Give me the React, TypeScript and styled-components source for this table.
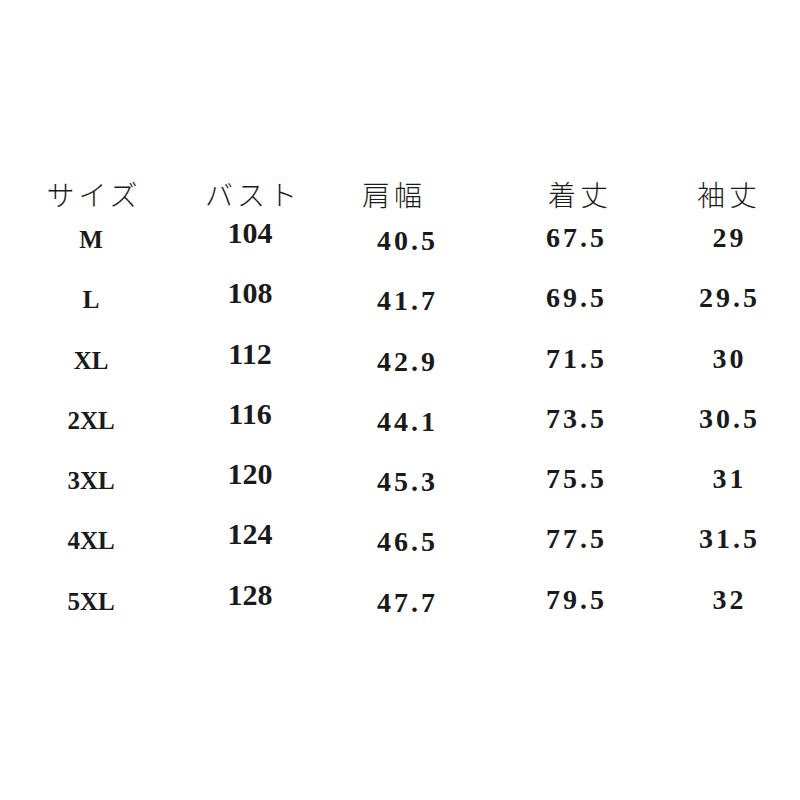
import * as React from 'react';
import styled, { createGlobalStyle } from 'styled-components';

const GlobalStyle = createGlobalStyle`
  html, body {
    margin: 0;
    padding: 0;
    background: #ffffff;
  }
`;

const Page = styled.div`
  width: 800px;
  height: 800px;
  background: #ffffff;
  color: #1a1a1a;
  padding-top: 176px;
  box-sizing: border-box;
`;

const Table = styled.div`
  display: flex;
`;

const Column = styled.div<{ $width: number }>`
  width: ${(p) => p.$width}px;
  display: flex;
  flex-direction: column;
  align-items: center;
`;

const Header = styled.div<{ $dx: number }>`
  font-family: "Noto Sans CJK JP", sans-serif;
  font-weight: 300;
  font-size: 28px;
  line-height: 36px;
  letter-spacing: 4px;
  padding-left: ${(p) => (p.$dx > 0 ? p.$dx * 2 : 0)}px;
  padding-right: ${(p) => (p.$dx < 0 ? -p.$dx * 2 : 0)}px;
`;

const Values = styled.div<{ $top: number }>`
  display: flex;
  flex-direction: column;
  align-items: center;
  margin-top: ${(p) => p.$top}px;
`;

const Cell = styled.div<{ $size: number; $spacing: number }>`
  font-family: "Liberation Serif", "DejaVu Serif", serif;
  font-weight: bold;
  font-size: ${(p) => p.$size}px;
  letter-spacing: ${(p) => p.$spacing}px;
  padding-left: ${(p) => p.$spacing}px;
  height: 60.3px;
  line-height: 30px;
`;

type Col = {
  title: string;
  width: number;
  dx: number;
  top: number;
  size: number;
  spacing: number;
  values: string[];
};

const columns: Col[] = [
  { title: 'サイズ', width: 182, dx: 3, top: 13, size: 25, spacing: 0, values: ['M', 'L', 'XL', '2XL', '3XL', '4XL', '5XL'] },
  { title: 'バスト', width: 136, dx: 3, top: 6, size: 30, spacing: 0, values: ['104', '108', '112', '116', '120', '124', '128'] },
  { title: '肩幅', width: 176, dx: -12, top: 14, size: 28, spacing: 3, values: ['40.5', '41.7', '42.9', '44.1', '45.3', '46.5', '47.7'] },
  { title: '着丈', width: 162, dx: 5, top: 11, size: 28, spacing: 3, values: ['67.5', '69.5', '71.5', '73.5', '75.5', '77.5', '79.5'] },
  { title: '袖丈', width: 144, dx: 1, top: 11, size: 28, spacing: 3, values: ['29', '29.5', '30', '30.5', '31', '31.5', '32'] },
];

const App: React.FunctionComponent = () => (
  <Page>
    <GlobalStyle />
    <Table>
      {columns.map((c) => (
        <Column key={c.title} $width={c.width}>
          <Header $dx={c.dx}>{c.title}</Header>
          <Values $top={c.top}>
            {c.values.map((v) => (
              <Cell key={v} $size={c.size} $spacing={c.spacing}>
                {v}
              </Cell>
            ))}
          </Values>
        </Column>
      ))}
    </Table>
  </Page>
);

export default App;
